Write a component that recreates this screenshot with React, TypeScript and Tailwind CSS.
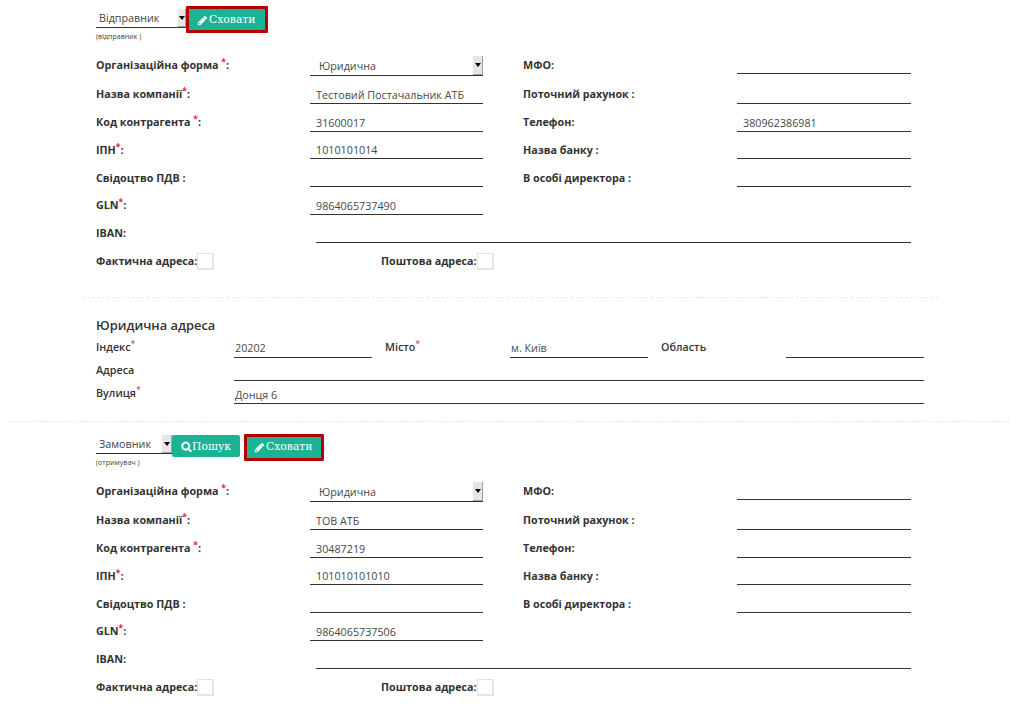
import type { ReactNode } from 'react';

function Pencil() {
  return (
    <svg viewBox="0 0 1792 1792" className="h-[11px] w-[11px] shrink-0" fill="currentColor">
      <path d="M491 1536l91-91-235-235-91 91v107h128v128h107zm523-928q0-22-22-22-10 0-17 7l-542 542q-7 7-7 17 0 22 22 22 10 0 17-7l542-542q7-7 7-17zm-54-192l416 416-832 832h-416v-416zm683 96q0 53-37 90l-166 166-416-416 166-165q36-38 90-38 53 0 91 38l235 234q37 39 37 91z" />
    </svg>
  );
}

function Search() {
  return (
    <svg viewBox="0 0 1792 1792" className="h-[11px] w-[11px] shrink-0" fill="currentColor" stroke="currentColor" strokeWidth="70">
      <path d="M1216 832q0-185-131.5-316.5t-316.5-131.5-316.5 131.5-131.5 316.5 131.5 316.5 316.5 131.5 316.5-131.5 131.5-316.5zm512 832q0 52-38 90t-90 38q-54 0-90-38l-343-342q-179 124-399 124-143 0-273.5-55.5t-225-150-150-225-55.5-273.5 55.5-273.5 150-225 225-150 273.5-55.5 273.5 55.5 225 150 150 225 55.5 273.5q0 220-124 399l343 343q37 37 37 90z" />
    </svg>
  );
}

function Star({ className = '' }: { className?: string }) {
  return <sup className={`text-[#ed1c4a] ${className}`}>*</sup>;
}

function Arrow({ className }: { className: string }) {
  return (
    <span className={`flex items-center justify-center overflow-hidden border-r border-b border-[#a0a0a0] bg-[#e6e6e6] ${className}`}>
      <svg viewBox="0 0 6 4" className="h-[4px] w-[6px] shrink-0" fill="#000">
        <path d="M0 0h6L3 4z" />
      </svg>
    </span>
  );
}

function HideButton({ className }: { className: string }) {
  return (
    <button className={`flex items-center rounded-[1px] border-[3px] border-[#b80000] bg-[#1ab394] font-['DejaVu_Serif',serif] text-[10.8px] leading-[16px] text-white ${className}`}>
      <Pencil />
      <span className="ml-px">Сховати</span>
    </button>
  );
}

type Field = { label: string; required?: boolean; value?: string };
type Line = { height: string; pad: string; inputPad?: string; left: Field; right?: Field };

function Label({ field, className }: { field: Field; className: string }) {
  return (
    <label className={`block font-bold whitespace-pre ${className}`}>
      {field.label}
      {field.required && <Star className="text-[8.5px]" />}:
    </label>
  );
}

const input = 'block border-b border-[#333] bg-transparent pl-[6px] text-[#484848] outline-none';

function FormLine({ line }: { line: Line }) {
  const inputPad = line.inputPad ?? 'pt-[11px]';
  return (
    <div className={`flex ${line.height}`}>
      <Label field={line.left} className={`w-[214px] ${line.pad}`} />
      <input className={`${input} w-[173px] ${inputPad}`} defaultValue={line.left.value} />
      {line.right && (
        <>
          <Label field={line.right} className={`ml-[40px] w-[214px] ${line.pad}`} />
          <input className={`${input} w-[174px] ${inputPad}`} defaultValue={line.right.value} />
        </>
      )}
    </div>
  );
}

function CheckField({ label, className = '' }: { label: string; className?: string }) {
  return (
    <label className={`flex font-bold ${className}`}>
      <span>{label}</span>
      <span className="h-[17px] w-[17px] shrink-0 border-t border-r-2 border-b-2 border-l border-[#e4e4e1] bg-white" />
    </label>
  );
}

type Party = { name: string; tax: string; code: string; gln: string; phone?: string };

function PartySection({ toolbar, note, party }: { toolbar: ReactNode; note: string; party: Party }) {
  const lines: Line[] = [
    { height: 'h-[28px]', pad: 'pt-[10px]', left: { label: 'Назва компанії', required: true, value: party.name }, right: { label: 'Поточний рахунок ' } },
    { height: 'h-[28px]', pad: 'pt-[10px]', left: { label: 'Код контрагента ', required: true, value: party.code }, right: { label: 'Телефон', value: party.phone } },
    { height: 'h-[27px]', pad: 'pt-[10px]', inputPad: 'pt-[9px]', left: { label: 'ІПН', required: true, value: party.tax }, right: { label: 'Назва банку ' } },
    { height: 'h-[28px]', pad: 'pt-[11px]', left: { label: 'Свідоцтво ПДВ ' }, right: { label: 'В особі директора ' } },
    { height: 'h-[28px]', pad: 'pt-[10px]', left: { label: 'GLN', required: true, value: party.gln } },
  ];
  return (
    <section className="pl-[96px]">
      <div className="flex h-[32px] items-start">{toolbar}</div>
      <div className="h-[20px] text-[7.1px] leading-[8px] text-[#444]">{note}</div>
      <div className="flex h-[24px] items-start">
        <Label field={{ label: 'Організаційна форма ', required: true }} className="w-[214px] pt-[5px]" />
        <div className="flex h-[24px] w-[173px] border-b border-[#333] pl-[9px] text-[#484848]">
          <span className="grow pt-[6px]">Юридична</span>
          <Arrow className="mt-[4px] h-[19px] w-[10px]" />
        </div>
        <Label field={{ label: 'МФО' }} className="ml-[40px] w-[214px] pt-[5px]" />
        <input className={`${input} h-[22px] w-[174px]`} />
      </div>
      {lines.map((line) => (
        <FormLine key={line.left.label} line={line} />
      ))}
      <div className="flex h-[28px]">
        <Label field={{ label: 'IBAN' }} className="w-[220px] pt-[10px]" />
        <input className={`${input} w-[595px]`} />
      </div>
      <div className="flex pt-[10px]">
        <CheckField label="Фактична адреса:" className="w-[285px]" />
        <CheckField label="Поштова адреса:" />
      </div>
    </section>
  );
}

const addressInput = 'block border-b border-[#333] bg-transparent pl-px font-normal text-[#484848] outline-none';

export default function App() {
  return (
    <main className="h-[721px] w-[1027px] overflow-hidden bg-white font-['Open_Sans',sans-serif] text-[10.75px] leading-[16px] text-[#333]">
      <PartySection
        toolbar={
          <>
            <div className="flex h-[28px] w-[90px] border-b border-[#333] pl-[3px] text-[#444]">
              <span className="grow pt-[10px]">Відправник</span>
              <Arrow className="mt-[9px] h-[18px] w-[8px]" />
            </div>
            <HideButton className="mt-[6px] h-[27px] w-[82px] pt-px pl-[8px]" />
          </>
        }
        note="(відправник )"
        party={{ name: 'Тестовий Постачальник АТБ', code: '31600017', tax: '1010101014', gln: '9864065737490', phone: '380962386981' }}
      />
      <hr className="mt-[27px] ml-[82px] w-[856px] border-t border-dashed border-[#e7eaec]" />
      <section className="h-[123px] pt-[17px] pl-[96px] font-semibold">
        <h4 className="h-[23px] text-[12.9px] leading-[20px]">Юридична адреса</h4>
        <div className="flex h-[20px]">
          <label className="w-[138px] pt-px">Індекс<Star className="text-[9px] font-normal" /></label>
          <input className={`${addressInput} w-[138px] pt-px`} defaultValue="20202" />
          <label className="ml-[13px] w-[125px] pt-px">Місто<Star className="text-[9px] font-normal" /></label>
          <input className={`${addressInput} w-[138px] pt-px`} defaultValue="м. Київ" />
          <label className="ml-[13px] w-[125px] pt-px">Область</label>
          <input className={`${addressInput} w-[138px] pt-px`} />
        </div>
        <div className="flex h-[23px]">
          <label className="w-[138px] pt-[4px]">Адреса</label>
          <input className={`${addressInput} w-[690px] pt-[5px]`} />
        </div>
        <div className="flex h-[23px]">
          <label className="w-[138px] pt-[4px]">Вулиця<Star className="text-[9px] font-normal" /></label>
          <input className={`${addressInput} w-[690px] pt-[5px]`} defaultValue="Донця 6" />
        </div>
      </section>
      <hr className="ml-[10px] w-[1000px] border-t border-dashed border-[#e7eaec]" />
      <div className="mt-[4px]">
        <PartySection
          toolbar={
            <>
              <div className="flex h-[28px] w-[76px] border-b border-[#333] pl-[3px] text-[#444]">
                <span className="grow pt-[10px]">Замовник</span>
                <Arrow className="mt-[9px] h-[18px] w-[10px]" />
              </div>
              <button className="mt-[9px] flex h-[22px] w-[68px] items-center rounded-[2px] bg-[#1ab394] pl-[9px] font-['DejaVu_Serif',serif] text-[10.8px] leading-[16px] text-white">
                <Search />
                <span className="mt-px">Пошук</span>
              </button>
              <HideButton className="mt-[8px] ml-[4px] h-[27px] w-[80px] pb-px pl-[7px]" />
            </>
          }
          note="(отримувач )"
          party={{ name: 'ТОВ АТБ', code: '30487219', tax: '101010101010', gln: '9864065737506' }}
        />
      </div>
    </main>
  );
}
